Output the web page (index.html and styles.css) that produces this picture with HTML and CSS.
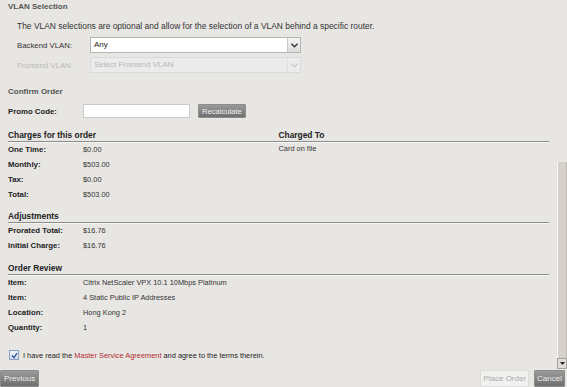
FILE: index.html
```html
<!DOCTYPE html>
<html lang="en">
<head>
    <meta charset="UTF-8">
    <title>Confirm Order</title>
    <link rel="stylesheet" href="styles.css">
</head>
<body>
    <div class="viewport">
        <div class="content">
            <h3 class="section-title">VLAN Selection</h3>
            <p class="intro">The VLAN selections are optional and allow for the selection of a VLAN behind a specific router.</p>

            <div class="vlan-row">
                <label class="vlan-label">Backend VLAN:</label>
                <div class="select">
                    <span class="select-value">Any</span>
                    <span class="select-arrow">
                        <svg width="7" height="5" viewBox="0 0 7 5"><path d="M0.5 0.8 L3.5 3.8 L6.5 0.8" fill="none" stroke="#333" stroke-width="1.4"/></svg>
                    </span>
                </div>
            </div>
            <div class="vlan-row disabled">
                <label class="vlan-label">Frontend VLAN:</label>
                <div class="select">
                    <span class="select-value">Select Frontend VLAN</span>
                    <span class="select-arrow">
                        <svg width="7" height="5" viewBox="0 0 7 5"><path d="M0.5 0.8 L3.5 3.8 L6.5 0.8" fill="none" stroke="#ccc" stroke-width="1.4"/></svg>
                    </span>
                </div>
            </div>

            <h3 class="section-title confirm">Confirm Order</h3>
            <div class="promo-row">
                <label class="promo-label">Promo Code:</label>
                <input type="text" class="promo-input">
                <button type="button" class="btn">Recalculate</button>
            </div>

            <div class="two-col">
                <div class="block">
                    <h4 class="block-title">Charges for this order</h4>
                    <div class="row"><span class="key">One Time:</span><span>$0.00</span></div>
                    <div class="row"><span class="key">Monthly:</span><span>$503.00</span></div>
                    <div class="row"><span class="key">Tax:</span><span>$0.00</span></div>
                    <div class="row"><span class="key">Total:</span><span>$503.00</span></div>
                </div>
                <div class="block">
                    <h4 class="block-title">Charged To</h4>
                    <div class="note">Card on file</div>
                </div>
            </div>

            <div class="block adjustments">
                <h4 class="block-title">Adjustments</h4>
                <div class="row"><span class="key">Prorated Total:</span><span>$16.76</span></div>
                <div class="row"><span class="key">Initial Charge:</span><span>$16.76</span></div>
            </div>

            <div class="block review">
                <h4 class="block-title">Order Review</h4>
                <div class="row"><span class="key">Item:</span><span>Citrix NetScaler VPX 10.1 10Mbps Platinum</span></div>
                <div class="row"><span class="key">Item:</span><span>4 Static Public IP Addresses</span></div>
                <div class="row"><span class="key">Location:</span><span>Hong Kong 2</span></div>
                <div class="row"><span class="key">Quantity:</span><span>1</span></div>
            </div>

            <div class="agree">
                <span class="check">
                    <svg width="7" height="7" viewBox="0 0 7 7"><path d="M1 3.5 L3 5.6 L6 1" fill="none" stroke="#2a4f9a" stroke-width="1.3"/></svg>
                </span>
                <span>I have read the <a href="#" class="msa">Master Service Agreement</a> and agree to the terms therein.</span>
            </div>
        </div>

        <div class="scrollbar">
            <div class="track"></div>
            <div class="thumb"></div>
            <div class="arrow">
                <svg width="5" height="3" viewBox="0 0 5 3"><path d="M0 0 H5 L2.5 3 Z" fill="#222"/></svg>
            </div>
        </div>
    </div>

    <div class="footer">
        <button type="button" class="btn btn-large">Previous</button>
        <div class="footer-right">
            <button type="button" class="btn btn-large btn-disabled">Place Order</button>
            <button type="button" class="btn btn-large btn-cancel">Cancel</button>
        </div>
    </div>
</body>
</html>
```

FILE: styles.css
```css
html, body {
    margin: 0;
    padding: 0;
}
body {
    width: 567px;
    height: 387px;
    overflow: hidden;
    background-color: #e8e6e3;
    font-family: "Liberation Sans", Arial, sans-serif;
    font-size: 7.6px;
    color: #333;
}
.viewport {
    display: flex;
    height: 369px;
}
.content {
    flex: 1;
    padding: 0 8px 0 8px;
}
.section-title {
    margin: 0;
    font-size: 8px;
    line-height: 14px;
    color: #555;
    font-weight: bold;
}
.intro {
    margin: 5px 0 0 9px;
    font-size: 8.45px;
    line-height: 14px;
    color: #333;
}
.vlan-row {
    display: flex;
    align-items: center;
    margin-top: 4px;
    padding-left: 9px;
}
.vlan-label {
    width: 73px;
    font-size: 7.8px;
    color: #333;
}
.select {
    display: flex;
    width: 209px;
    height: 14px;
    border: 1px solid #b5b5b5;
    background: #fff;
}
.select-value {
    flex: 1;
    padding-left: 3px;
    line-height: 14px;
    font-size: 8px;
    color: #222;
}
.select-arrow {
    width: 12px;
    display: flex;
    align-items: center;
    justify-content: center;
    background: linear-gradient(#f4f4f4, #dcdcdc);
    border-left: 1px solid #c8c8c8;
}
.vlan-row.disabled .vlan-label,
.vlan-row.disabled .select-value {
    color: #b8b8b8;
}
.vlan-row.disabled .select {
    background: #ebebeb;
    border-color: #dadada;
}
.vlan-row.disabled .select-arrow {
    background: #ececec;
    border-left-color: #e0e0e0;
}
.section-title.confirm {
    margin-top: 12px;
}
.promo-row {
    display: flex;
    align-items: center;
    margin-top: 5px;
}
.promo-label {
    width: 75px;
    font-weight: bold;
    color: #222;
    font-size: 7.8px;
}
.promo-input {
    width: 107px;
    height: 14px;
    box-sizing: border-box;
    margin: 0 8px 0 0;
    padding: 0;
    border: 1px solid #c9c9c9;
    background: #fff;
}
.btn {
    height: 14px;
    padding: 0 3px;
    border: 1px solid #8c8c8c;
    border-radius: 1px;
    background: linear-gradient(#9a9a9a, #6f6f6f);
    color: #eee;
    font-family: "Liberation Sans", Arial, sans-serif;
    font-size: 7.6px;
    cursor: pointer;
}
.btn-large {
    height: 17px;
    font-size: 8px;
}
.btn-disabled {
    padding: 0 2px;
    background: #f0f0ef;
    border-color: #dcdcdc;
    color: #aaa;
}
.btn-cancel {
    padding: 0 2px;
}
.two-col {
    display: flex;
    margin-top: 11px;
}
.two-col .block {
    flex: 1;
}
.block-title {
    margin: 0;
    font-size: 8.4px;
    line-height: 12px;
    font-weight: bold;
    color: #222;
    border-bottom: 1px solid #8d8d8d;
    box-shadow: 0 1px 0 #f6f6f6;
}
.row {
    display: flex;
    line-height: 15px;
    font-size: 7.4px;
}
.key {
    width: 75px;
    font-weight: bold;
    font-size: 7.8px;
    color: #222;
}
.note {
    line-height: 13px;
    font-size: 7.4px;
}
.adjustments {
    margin-top: 8px;
}
.review {
    margin-top: 9px;
}
.agree {
    display: flex;
    align-items: center;
    margin-top: 15px;
    padding-left: 1px;
    font-size: 7.4px;
    color: #222;
}
.check {
    width: 8px;
    height: 8px;
    margin-right: 4px;
    display: flex;
    align-items: center;
    justify-content: center;
    border: 1px solid #8aa0c4;
    background: linear-gradient(#f0f3f8, #d4dbe8);
}
.msa {
    color: #b3282d;
    text-decoration: none;
}
.scrollbar {
    width: 10px;
    display: flex;
    flex-direction: column;
}
.track {
    height: 162px;
}
.thumb {
    flex: 1;
    background: #d6d2cb;
    border-left: 1px solid #f7f7f5;
    box-shadow: inset -1px 0 0 #bdb9b2;
}
.arrow {
    height: 11px;
    display: flex;
    align-items: center;
    justify-content: center;
    background: #e0ddd8;
    border: 1px solid #a6a39e;
    box-sizing: border-box;
}
.footer {
    display: flex;
    justify-content: space-between;
    align-items: flex-end;
    height: 18px;
    padding-right: 2px;
}
.footer-right {
    display: flex;
    gap: 5px;
}
```
